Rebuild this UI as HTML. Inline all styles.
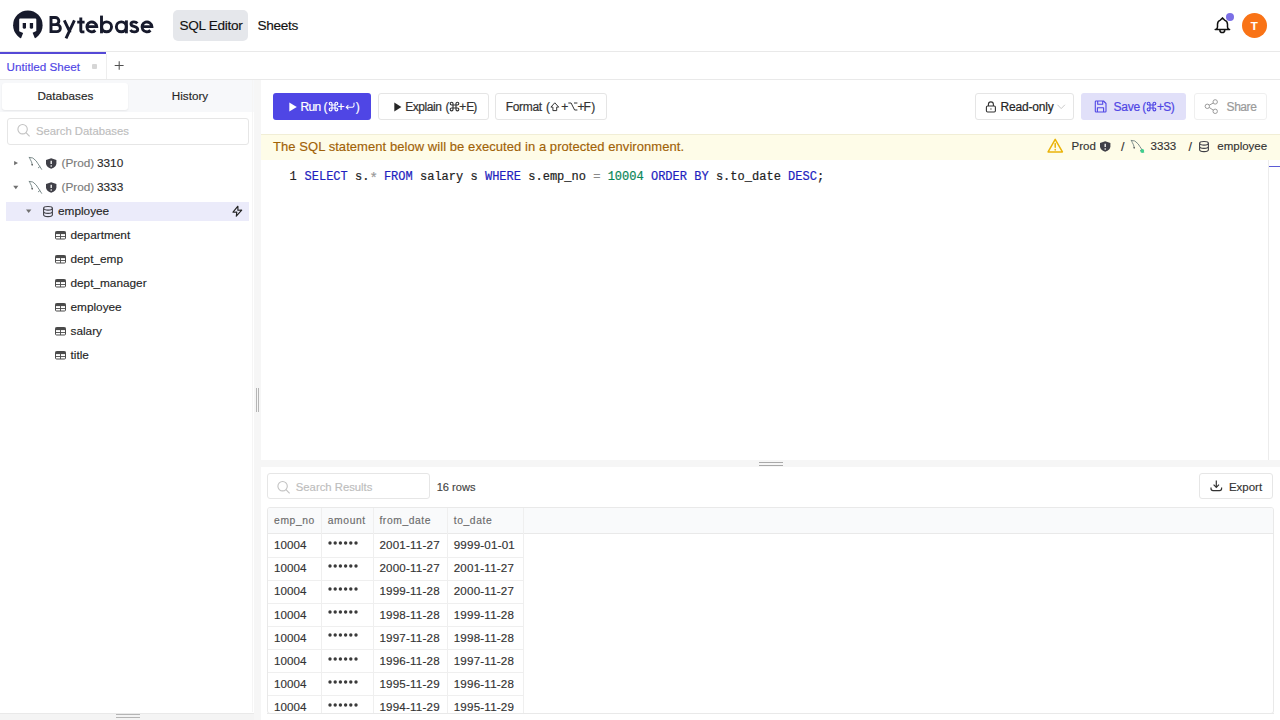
<!DOCTYPE html>
<html><head><meta charset="utf-8">
<style>
*{box-sizing:border-box;margin:0;padding:0}
html,body{width:1280px;height:720px;overflow:hidden;background:#fff;font-family:"Liberation Sans",sans-serif;color:#1f2937}
.a{position:absolute}
.t{position:absolute;white-space:nowrap;line-height:1;-webkit-text-stroke-width:0.15px}
.m{-webkit-text-stroke-width:0.3px}
svg{position:absolute;overflow:visible}
</style></head><body>
<svg style="left:0;top:0;width:0;height:0"><defs>
<g id="cmd"><path d="M3 3h3v3H3z M3 3V1.6A1.4 1.4 0 1 0 1.6 3H3 M6 3V1.6A1.4 1.4 0 1 1 7.4 3H6 M6 6v1.4A1.4 1.4 0 1 0 7.4 6H6 M3 6v1.4A1.4 1.4 0 1 1 1.6 6H3" fill="none"/></g>
<g id="tbl"><rect x="0.5" y="0.5" width="10" height="7.5" rx="1" fill="none" stroke="#4b4b4b" stroke-width="1"/><rect x="0.5" y="0.5" width="10" height="2.6" fill="#4b4b4b"/><path d="M0.5 5.5 H10.5 M5.5 3 V8" stroke="#4b4b4b" stroke-width="0.9"/></g>
<g id="dolphin" fill="none" stroke="#6f8080" stroke-width="0.9" stroke-linecap="round" stroke-linejoin="round"><path d="M0.2 0.3 Q4.2 -0.2 7.2 4 Q9 6.8 10.8 9.4 L12.6 12.3 M10.8 9.6 L9.3 10.8 M0.5 0.6 Q1.2 2.6 2.2 4.2 Q3 5.6 3.2 8"/><circle cx="3.2" cy="7.8" r="0.8" fill="#555" stroke="none"/></g>
<g id="shield"><path d="M5.2 0.3 L10.4 2 V5.3 Q10.4 8.9 5.2 10.7 Q0 8.9 0 5.3 V2 Z" fill="#404048"/><path d="M5.2 2.8 V6.1" stroke="#fff" stroke-width="1.3"/><circle cx="5.2" cy="8" r="0.8" fill="#fff"/></g>
<g id="dbi" fill="none" stroke="#3f3f46" stroke-width="1.1"><ellipse cx="5" cy="2.3" rx="4.4" ry="1.8"/><path d="M0.6 2.3 V8.8 Q0.6 10.6 5 10.6 Q9.4 10.6 9.4 8.8 V2.3 M0.6 5.6 Q0.6 7.4 5 7.4 Q9.4 7.4 9.4 5.6"/></g>
<g id="srch" fill="none" stroke="#c2c2c2" stroke-width="1.1"><circle cx="5.6" cy="5.2" r="4.7"/><path d="M9 8.6 L12.6 12.4"/></g>
</defs></svg>
<div class="a" style="left:0px;top:51px;width:1280px;height:1px;background:#e9e9e9"></div>
<svg style="left:0px;top:0px" width="50" height="50" viewBox="0 0 50 50"><circle cx="27.85" cy="25.3" r="14.75" fill="#171a2c"/>
<path d="M19.2 19.6 Q19.2 18.6 20.2 18.6 H35.3 Q36.3 18.6 36.3 19.6 V31 L32.6 32.8 L36.2 41.5 H19.8 L23.1 33.1 L19.2 31.2 Z" fill="#fff"/>
<path d="M22.7 22.9 H26 V27.3 Q26 28.8 24.35 28.8 Q22.7 28.8 22.7 27.3 Z" fill="#171a2c"/>
<path d="M29.8 22.9 H33.1 V27.3 Q33.1 28.8 31.45 28.8 Q29.8 28.8 29.8 27.3 Z" fill="#171a2c"/></svg>
<svg style="left:0px;top:0px" width="160" height="50" viewBox="0 0 160 50"><g fill="none" stroke="#171a2c" stroke-width="2.9">
<path d="M51 16 V33.1 M51 17.45 H55.25 A3.6 3.6 0 0 1 55.25 24.65 H51 M51 24.65 H56.85 A3.5 3.5 0 0 1 56.85 31.65 H51"/>
<path d="M64.3 20.4 L70.2 32.6 M74.4 20.4 L66 38.3"/>
<path d="M80.8 17.6 V30.2 Q80.8 31.85 82.4 31.85 H84.4 M77.2 22.15 H84.6"/>
<path d="M86.85 26.6 H96.75 A4.95 4.95 0 1 0 95.3 30.4"/>
<path d="M101.5 15.6 V33.3"/><circle cx="106.6" cy="26.85" r="4.95"/>
<circle cx="121.3" cy="26.85" r="4.95"/><path d="M126.4 20.4 V33.3"/>
<path d="M137.3 23.4 Q136.2 21.85 133.9 21.85 Q131 21.85 131 23.9 Q131 25.6 134 26.3 Q137.7 27.1 137.7 29.5 Q137.7 31.85 134.3 31.85 Q131.6 31.85 130.4 29.9"/>
<path d="M142 26.6 H151.9 A4.95 4.95 0 1 0 150.45 30.4"/>
</g></svg>
<div class="a" style="left:173px;top:10px;width:74.5px;height:31px;background:#e5e7eb;border-radius:5px"></div>
<div class="t" style="left:179.4px;top:19.4px;font-size:13.6px;color:#111;letter-spacing:-0.3px">SQL Editor</div>
<div class="t" style="left:257.5px;top:19.4px;font-size:13.6px;color:#111;letter-spacing:-0.3px">Sheets</div>
<svg style="left:1214px;top:16px" width="18" height="18" viewBox="0 0 18 18"><path d="M1.2 13.4 H15.6 M2 13.4 Q3.5 12.5 3.5 11 V8.3 Q3.5 5.2 6.4 4.1 L8.5 1.9 L10.5 4.1 Q13.5 5.2 13.5 8.3 V11 Q13.5 12.5 15 13.4 M5.9 14.2 A2.4 2.4 0 0 0 10.7 14.2" fill="none" stroke="#111" stroke-width="1.5" stroke-linecap="round" stroke-linejoin="round"/></svg>
<div class="a" style="left:1225.8px;top:12.5px;width:8px;height:8px;border-radius:50%;background:#7b6fe6"></div>
<div class="a" style="left:1241.7px;top:12.9px;width:25px;height:25px;border-radius:50%;background:#f97316"></div>
<div class="t" style="left:1250.8px;top:21px;font-size:11.5px;color:#fff;font-weight:bold">T</div>
<div class="a" style="left:0px;top:79px;width:1280px;height:1px;background:#e9e9e9"></div>
<div class="a" style="left:0px;top:52px;width:106px;height:2px;background:#5549d6"></div>
<div class="a" style="left:106px;top:54px;width:1px;height:25px;background:#eeeeee"></div>
<div class="t" style="left:6.6px;top:61px;font-size:11.7px;color:#5046e5;">Untitled Sheet</div>
<div class="a" style="left:91.8px;top:64px;width:5.5px;height:5px;border-radius:1px;background:#d6d6d6"></div>
<svg style="left:113px;top:60px" width="12" height="12" viewBox="0 0 12 12"><path d="M6.2 1.2V9.7M1.7 5.5H10.6" stroke="#505050" stroke-width="1.05"/></svg>
<div class="a" style="left:0px;top:80px;width:254px;height:32px;background:#f7f8fa"></div>
<div class="a" style="left:2px;top:82.5px;width:126px;height:27.5px;background:#fff;border-radius:3px;box-shadow:0 1px 2px rgba(0,0,0,.07)"></div>
<div class="t" style="left:37.4px;top:90px;font-size:11.7px;color:#262626;">Databases</div>
<div class="t" style="left:171.8px;top:90px;font-size:11.7px;color:#262626;">History</div>
<div class="a" style="left:7px;top:118px;width:241.5px;height:27px;border:1px solid #e6e6e6;border-radius:3px"></div>
<svg style="left:17px;top:124px" width="14" height="14" viewBox="0 0 14 14"><use href="#srch"/></svg>
<div class="t" style="left:35.9px;top:126px;font-size:11.3px;color:#bdbdbd;">Search Databases</div>
<svg style="left:0px;top:150px" width="60" height="50" viewBox="0 0 60 50"><path d="M14.1 10.9 L18 13.1 L14.1 15.3 Z" fill="#707070"/><path d="M13.2 35.8 L18.4 35.8 L15.8 39.3 Z" fill="#707070"/></svg>
<div class="a" style="left:6px;top:202.3px;width:242.5px;height:18.3px;background:#ebebfa"></div>
<svg style="left:0px;top:150px" width="60" height="70" viewBox="0 0 60 70"><path d="M26 59.4 L31.4 59.4 L28.7 63.1 Z" fill="#707070"/></svg>
<svg style="left:28.75px;top:156.9px" width="14" height="14" viewBox="0 0 14 14"><use href="#dolphin"/></svg>
<svg style="left:45.8px;top:158.2px" width="11" height="11" viewBox="0 0 11 11"><use href="#shield"/></svg>
<div class="t" style="left:61.5px;top:158px;font-size:11.8px;color:#7a7a7a;">(Prod)</div>
<div class="t" style="left:97px;top:158px;font-size:11.8px;color:#2a2a2a;">3310</div>
<svg style="left:28.75px;top:180.9px" width="14" height="14" viewBox="0 0 14 14"><use href="#dolphin"/></svg>
<svg style="left:45.8px;top:182.2px" width="11" height="11" viewBox="0 0 11 11"><use href="#shield"/></svg>
<div class="t" style="left:61.5px;top:182px;font-size:11.8px;color:#7a7a7a;">(Prod)</div>
<div class="t" style="left:97px;top:182px;font-size:11.8px;color:#2a2a2a;">3333</div>
<svg style="left:43px;top:206px" width="10" height="11" viewBox="0 0 10 11"><use href="#dbi"/></svg>
<div class="t" style="left:58px;top:206px;font-size:11.8px;color:#262626;">employee</div>
<svg style="left:232px;top:205px" width="11" height="12" viewBox="0 0 11 12"><path d="M5.9 1.2 L1 7.2 L4.8 7 L4.3 11.2 L9.7 5.1 L5.9 5.3 Z" fill="none" stroke="#222" stroke-width="1.15" stroke-linejoin="round"/></svg>
<svg style="left:55.3px;top:231px" width="12" height="9" viewBox="0 0 12 9"><use href="#tbl"/></svg>
<div class="t" style="left:70.5px;top:230px;font-size:11.8px;color:#262626;">department</div>
<svg style="left:55.3px;top:255px" width="12" height="9" viewBox="0 0 12 9"><use href="#tbl"/></svg>
<div class="t" style="left:70.5px;top:254px;font-size:11.8px;color:#262626;">dept_emp</div>
<svg style="left:55.3px;top:279px" width="12" height="9" viewBox="0 0 12 9"><use href="#tbl"/></svg>
<div class="t" style="left:70.5px;top:278px;font-size:11.8px;color:#262626;">dept_manager</div>
<svg style="left:55.3px;top:303px" width="12" height="9" viewBox="0 0 12 9"><use href="#tbl"/></svg>
<div class="t" style="left:70.5px;top:302px;font-size:11.8px;color:#262626;">employee</div>
<svg style="left:55.3px;top:327px" width="12" height="9" viewBox="0 0 12 9"><use href="#tbl"/></svg>
<div class="t" style="left:70.5px;top:326px;font-size:11.8px;color:#262626;">salary</div>
<svg style="left:55.3px;top:351px" width="12" height="9" viewBox="0 0 12 9"><use href="#tbl"/></svg>
<div class="t" style="left:70.5px;top:350px;font-size:11.8px;color:#262626;">title</div>
<div class="a" style="left:252px;top:80px;width:1px;height:632px;background:#f5f5f5"></div>
<div class="a" style="left:254px;top:80px;width:6.5px;height:640px;background:#f6f6f6"></div>
<div class="a" style="left:256px;top:388px;width:1px;height:24px;background:#b5b5b5"></div>
<div class="a" style="left:258.3px;top:388px;width:1px;height:24px;background:#b5b5b5"></div>
<div class="a" style="left:0px;top:712.5px;width:254px;height:8px;background:#f4f4f4;border-top:1px solid #e9e9e9"></div>
<div class="a" style="left:116px;top:714px;width:24px;height:1px;background:#b5b5b5"></div>
<div class="a" style="left:116px;top:716.5px;width:24px;height:1px;background:#b5b5b5"></div>
<div class="a" style="left:273.3px;top:93px;width:97.5px;height:26.7px;background:#4f46e5;border-radius:3px"></div>
<svg style="left:289px;top:101.5px" width="9" height="10" viewBox="0 0 9 10"><path d="M0.3 0.4 L7.8 4.9 L0.3 9.4 Z" fill="#fff"/></svg>
<div class="t" style="left:300.6px;top:100.5px;font-size:12px;color:#fff;-webkit-text-stroke-width:0.2px;letter-spacing:-0.7px">Run</div>
<div class="t" style="left:323.6px;top:100.5px;font-size:12px;color:#fff;-webkit-text-stroke-width:0.2px">(</div>
<svg style="left:328.6px;top:102.2px" width="9" height="9" viewBox="0 0 9 9"><use href="#cmd" stroke="#fff" stroke-width="1.15"/></svg>
<div class="t" style="left:337.6px;top:100.5px;font-size:12px;color:#fff;-webkit-text-stroke-width:0.2px">+</div>
<svg style="left:344.8px;top:101.6px" width="10" height="9" viewBox="0 0 10 9"><path d="M9 0.8V3.6A1.6 1.6 0 0 1 7.4 5.2H1.2 M3.4 3L1.2 5.2L3.4 7.4" fill="none" stroke="#fff" stroke-width="1.05"/></svg>
<div class="t" style="left:355.8px;top:100.5px;font-size:12px;color:#fff;-webkit-text-stroke-width:0.2px">)</div>
<div class="a" style="left:378px;top:93px;width:110.5px;height:26.7px;border:1px solid #e5e5e5;border-radius:3px"></div>
<svg style="left:393.8px;top:101.5px" width="9" height="10" viewBox="0 0 9 10"><path d="M0.3 0.4 L7.4 4.9 L0.3 9.4 Z" fill="#262626"/></svg>
<div class="t" style="left:405.2px;top:100.5px;font-size:12px;color:#333;-webkit-text-stroke-width:0.2px;letter-spacing:-0.45px">Explain</div>
<div class="t" style="left:445.4px;top:100.5px;font-size:12px;color:#333;-webkit-text-stroke-width:0.2px">(</div>
<svg style="left:449.5px;top:102.2px" width="9" height="9" viewBox="0 0 9 9"><use href="#cmd" stroke="#333" stroke-width="1.15"/></svg>
<div class="t" style="left:459.2px;top:100.5px;font-size:12px;color:#333;-webkit-text-stroke-width:0.2px">+</div>
<div class="t" style="left:466.3px;top:100.5px;font-size:12px;color:#333;-webkit-text-stroke-width:0.2px;letter-spacing:-0.7px">E</div>
<div class="t" style="left:473.2px;top:100.5px;font-size:12px;color:#333;-webkit-text-stroke-width:0.2px">)</div>
<div class="a" style="left:494.5px;top:93px;width:112.5px;height:26.7px;border:1px solid #e5e5e5;border-radius:3px"></div>
<div class="t" style="left:505.8px;top:100.5px;font-size:12px;color:#333;-webkit-text-stroke-width:0.2px;letter-spacing:-0.35px">Format</div>
<div class="t" style="left:546px;top:100.5px;font-size:12px;color:#333;-webkit-text-stroke-width:0.2px">(</div>
<svg style="left:550px;top:101.8px" width="10" height="10" viewBox="0 0 10 10"><path d="M4.8 0.8L0.9 5.1H2.9V8.6H6.7V5.1H8.7Z" fill="none" stroke="#333" stroke-width="1" stroke-linejoin="round"/></svg>
<div class="t" style="left:561.2px;top:100.5px;font-size:12px;color:#333;-webkit-text-stroke-width:0.2px">+</div>
<svg style="left:568.2px;top:102.3px" width="10" height="9" viewBox="0 0 10 9"><path d="M0.3 1H3.1L6.6 8H9.4 M6 1H9.4" fill="none" stroke="#333" stroke-width="1"/></svg>
<div class="t" style="left:577.5px;top:100.5px;font-size:12px;color:#333;-webkit-text-stroke-width:0.2px">+</div>
<div class="t" style="left:583.6px;top:100.5px;font-size:12px;color:#333;-webkit-text-stroke-width:0.2px;letter-spacing:-0.7px">F</div>
<div class="t" style="left:591.2px;top:100.5px;font-size:12px;color:#333;-webkit-text-stroke-width:0.2px">)</div>
<div class="a" style="left:975px;top:93px;width:99px;height:26.7px;border:1px solid #e5e5e5;border-radius:3px"></div>
<svg style="left:985px;top:100.5px" width="12" height="12" viewBox="0 0 12 12"><rect x="1.4" y="5" width="9" height="6" rx="1.2" fill="none" stroke="#333" stroke-width="1.1"/><path d="M3.4 5V3.4A2.5 2.5 0 0 1 8.4 3.4V5 M5.3 8H6.6" fill="none" stroke="#333" stroke-width="1.1"/></svg>
<div class="t" style="left:1000.6px;top:100.5px;font-size:12px;color:#262626;-webkit-text-stroke-width:0.2px;letter-spacing:-0.2px">Read-only</div>
<svg style="left:1056.5px;top:103.5px" width="9" height="6" viewBox="0 0 9 6"><path d="M0.5 0.8L4.2 4.6L7.9 0.8" fill="none" stroke="#c4c4c4" stroke-width="0.9"/></svg>
<div class="a" style="left:1081px;top:93px;width:105px;height:26.7px;background:#e1e0f9;border-radius:3px"></div>
<svg style="left:1093.5px;top:100px" width="13" height="13" viewBox="0 0 13 13"><path d="M1.3 1.8A0.8 0.8 0 0 1 2.1 1H9.5L12 3.5V11.2A0.8 0.8 0 0 1 11.2 12H2.1A0.8 0.8 0 0 1 1.3 11.2Z M3.7 1V4.2H8.7V1 M3.4 12V7.8H9.6V12" fill="none" stroke="#5046e5" stroke-width="1.1" stroke-linejoin="round"/></svg>
<div class="t" style="left:1113.5px;top:100.5px;font-size:12px;color:#5046e5;-webkit-text-stroke-width:0.2px;letter-spacing:-0.2px">Save</div>
<div class="t" style="left:1142.3px;top:100.5px;font-size:12px;color:#5046e5;-webkit-text-stroke-width:0.2px">(</div>
<svg style="left:1146.5px;top:102.2px" width="9" height="9" viewBox="0 0 9 9"><use href="#cmd" stroke="#5046e5" stroke-width="1.15"/></svg>
<div class="t" style="left:1157px;top:100.5px;font-size:12px;color:#5046e5;-webkit-text-stroke-width:0.2px">+</div>
<div class="t" style="left:1163.3px;top:100.5px;font-size:12px;color:#5046e5;-webkit-text-stroke-width:0.2px;letter-spacing:-0.7px">S</div>
<div class="t" style="left:1170.8px;top:100.5px;font-size:12px;color:#5046e5;-webkit-text-stroke-width:0.2px">)</div>
<div class="a" style="left:1193.5px;top:93px;width:73px;height:26.7px;border:1px solid #efefef;border-radius:3px"></div>
<svg style="left:1204px;top:98px" width="16" height="17" viewBox="0 0 16 17"><g fill="none" stroke="#9a9a9a" stroke-width="1"><circle cx="11.2" cy="3.9" r="2.2"/><circle cx="3.3" cy="8.3" r="2.2"/><circle cx="11.2" cy="13.3" r="2.2"/><path d="M5.2 7.2L9.3 5 M5.2 9.4L9.3 12.2"/></g></svg>
<div class="t" style="left:1226.6px;top:100.5px;font-size:12px;color:#9a9a9a;-webkit-text-stroke-width:0.2px;letter-spacing:-0.45px">Share</div>
<div class="a" style="left:260.5px;top:133.5px;width:1020px;height:26.5px;background:#fefce8;border-top:1px solid #f1eed6"></div>
<div class="t" style="left:273px;top:140px;font-size:13px;color:#a16207;letter-spacing:0.06px">The SQL statement below will be executed in a protected environment.</div>
<svg style="left:1046.5px;top:137.5px" width="17" height="16" viewBox="0 0 17 16"><path d="M8.2 1.4L15.4 13.9H1.1Z" fill="none" stroke="#eab308" stroke-width="1.5" stroke-linejoin="round"/><path d="M8.2 5.6V9.3 M8.2 11.4V11.9" fill="none" stroke="#eab308" stroke-width="1.5" stroke-linecap="round"/></svg>
<div class="t" style="left:1071.6px;top:141px;font-size:11.5px;color:#333;">Prod</div>
<svg style="left:1100.3px;top:141px" width="11" height="11" viewBox="0 0 11 11"><use href="#shield"/></svg>
<div class="t" style="left:1121px;top:141px;font-size:12.5px;color:#333;">/</div>
<svg style="left:1131.3px;top:140.3px" width="14" height="14" viewBox="0 0 14 14"><use href="#dolphin"/><circle cx="11.3" cy="11" r="1.9" fill="#3ecf8e"/></svg>
<div class="t" style="left:1150.6px;top:141px;font-size:11.5px;color:#333;">3333</div>
<div class="t" style="left:1188.5px;top:141px;font-size:12.5px;color:#333;">/</div>
<svg style="left:1198.5px;top:141px" width="10" height="11" viewBox="0 0 10 11"><use href="#dbi"/></svg>
<div class="t" style="left:1217.3px;top:141px;font-size:11.5px;color:#333;">employee</div>
<div class="t" style="left:289.5px;top:171px;font-size:12px;color:#222;font-family:'Liberation Mono',monospace">1</div>
<div class="t" style="left:304.5px;top:170px;font-size:12px;color:#222;font-family:'Liberation Mono',monospace;letter-spacing:0.015px;-webkit-text-stroke-width:0.2px"><span style="color:#1f1fc0">SELECT</span> s.<span style="color:#9a9a9a;display:inline-block;width:7.2px;text-align:center;font-size:14px;position:relative;top:2.5px;line-height:12px">*</span> <span style="color:#1f1fc0">FROM</span> salary s <span style="color:#1f1fc0">WHERE</span> s.emp_no <span style="color:#8a8a8a">=</span> <span style="color:#098658">10004</span> <span style="color:#1f1fc0">ORDER</span> <span style="color:#1f1fc0">BY</span> s.to_date <span style="color:#1f1fc0">DESC</span>;</div>
<div class="a" style="left:1268px;top:160px;width:1px;height:300px;background:#ececec"></div>
<div class="a" style="left:1269px;top:165.5px;width:11px;height:1.5px;background:#5b5bd6"></div>
<div class="a" style="left:260.5px;top:460px;width:1020px;height:7px;background:#f6f6f6"></div>
<div class="a" style="left:758.5px;top:462px;width:24px;height:1px;background:#a9a9a9"></div>
<div class="a" style="left:758.5px;top:464.5px;width:24px;height:1px;background:#a9a9a9"></div>
<div class="a" style="left:267px;top:472.6px;width:162.5px;height:26.8px;border:1px solid #e6e6e6;border-radius:3px"></div>
<svg style="left:277.3px;top:480.8px" width="14" height="14" viewBox="0 0 14 14"><use href="#srch"/></svg>
<div class="t" style="left:295.8px;top:482px;font-size:11.3px;color:#bdbdbd;">Search Results</div>
<div class="t" style="left:436.7px;top:482px;font-size:11.1px;color:#444;">16 rows</div>
<div class="a" style="left:1198.7px;top:473.3px;width:74.6px;height:26.2px;border:1px solid #e6e6e6;border-radius:3px"></div>
<svg style="left:1210px;top:480px" width="13" height="12" viewBox="0 0 13 12"><path d="M6.3 0.6V7.2 M3.6 4.6L6.3 7.3L9 4.6 M1 7.6V8.6A2 2 0 0 0 3 10.6H9.6A2 2 0 0 0 11.6 8.6V7.6" fill="none" stroke="#333" stroke-width="1.2"/></svg>
<div class="t" style="left:1228.9px;top:482px;font-size:11.5px;color:#333;">Export</div>
<div class="a" style="left:267px;top:506.5px;width:1006.5px;height:207px;border:1px solid #e9e9e9;border-radius:3px"></div>
<div class="a" style="left:268px;top:507.5px;width:1004.5px;height:26px;background:#f9fafb;border-bottom:1px solid #e9e9e9;border-radius:2px 2px 0 0"></div>
<div class="a" style="left:321px;top:507.5px;width:1px;height:205px;background:#efefef"></div>
<div class="a" style="left:372.7px;top:507.5px;width:1px;height:205px;background:#efefef"></div>
<div class="a" style="left:446.7px;top:507.5px;width:1px;height:205px;background:#efefef"></div>
<div class="a" style="left:523px;top:507.5px;width:1px;height:205px;background:#efefef"></div>
<div class="t" style="left:274.1px;top:516px;font-size:10.3px;color:#6b6b6b;letter-spacing:0.6px">emp_no</div>
<div class="t" style="left:327.8px;top:516px;font-size:10.3px;color:#6b6b6b;letter-spacing:0.6px">amount</div>
<div class="t" style="left:379.4px;top:516px;font-size:10.3px;color:#6b6b6b;letter-spacing:0.6px">from_date</div>
<div class="t" style="left:453.7px;top:516px;font-size:10.3px;color:#6b6b6b;letter-spacing:0.6px">to_date</div>
<div class="t" style="left:274.1px;top:539px;font-size:11.6px;color:#333;">10004</div>
<div class="t" style="left:379.4px;top:539px;font-size:11.6px;color:#333;letter-spacing:0.2px">2001-11-27</div>
<div class="t" style="left:453.7px;top:539px;font-size:11.6px;color:#333;letter-spacing:0.2px">9999-01-01</div>
<svg style="left:328px;top:541.0px" width="32" height="4" viewBox="0 0 32 4"><g fill="#3a3a3a"><circle cx="2.0" cy="2" r="1.7"/><circle cx="7.2" cy="2" r="1.7"/><circle cx="12.4" cy="2" r="1.7"/><circle cx="17.6" cy="2" r="1.7"/><circle cx="22.8" cy="2" r="1.7"/><circle cx="28.0" cy="2" r="1.7"/></g></svg>
<div class="a" style="left:268px;top:556.5px;width:255px;height:1px;background:#efefef"></div>
<div class="t" style="left:274.1px;top:562px;font-size:11.6px;color:#333;">10004</div>
<div class="t" style="left:379.4px;top:562px;font-size:11.6px;color:#333;letter-spacing:0.2px">2000-11-27</div>
<div class="t" style="left:453.7px;top:562px;font-size:11.6px;color:#333;letter-spacing:0.2px">2001-11-27</div>
<svg style="left:328px;top:564.1px" width="32" height="4" viewBox="0 0 32 4"><g fill="#3a3a3a"><circle cx="2.0" cy="2" r="1.7"/><circle cx="7.2" cy="2" r="1.7"/><circle cx="12.4" cy="2" r="1.7"/><circle cx="17.6" cy="2" r="1.7"/><circle cx="22.8" cy="2" r="1.7"/><circle cx="28.0" cy="2" r="1.7"/></g></svg>
<div class="a" style="left:268px;top:579.6px;width:255px;height:1px;background:#efefef"></div>
<div class="t" style="left:274.1px;top:585px;font-size:11.6px;color:#333;">10004</div>
<div class="t" style="left:379.4px;top:585px;font-size:11.6px;color:#333;letter-spacing:0.2px">1999-11-28</div>
<div class="t" style="left:453.7px;top:585px;font-size:11.6px;color:#333;letter-spacing:0.2px">2000-11-27</div>
<svg style="left:328px;top:587.2px" width="32" height="4" viewBox="0 0 32 4"><g fill="#3a3a3a"><circle cx="2.0" cy="2" r="1.7"/><circle cx="7.2" cy="2" r="1.7"/><circle cx="12.4" cy="2" r="1.7"/><circle cx="17.6" cy="2" r="1.7"/><circle cx="22.8" cy="2" r="1.7"/><circle cx="28.0" cy="2" r="1.7"/></g></svg>
<div class="a" style="left:268px;top:602.7px;width:255px;height:1px;background:#efefef"></div>
<div class="t" style="left:274.1px;top:609px;font-size:11.6px;color:#333;">10004</div>
<div class="t" style="left:379.4px;top:609px;font-size:11.6px;color:#333;letter-spacing:0.2px">1998-11-28</div>
<div class="t" style="left:453.7px;top:609px;font-size:11.6px;color:#333;letter-spacing:0.2px">1999-11-28</div>
<svg style="left:328px;top:610.3px" width="32" height="4" viewBox="0 0 32 4"><g fill="#3a3a3a"><circle cx="2.0" cy="2" r="1.7"/><circle cx="7.2" cy="2" r="1.7"/><circle cx="12.4" cy="2" r="1.7"/><circle cx="17.6" cy="2" r="1.7"/><circle cx="22.8" cy="2" r="1.7"/><circle cx="28.0" cy="2" r="1.7"/></g></svg>
<div class="a" style="left:268px;top:625.8px;width:255px;height:1px;background:#efefef"></div>
<div class="t" style="left:274.1px;top:632px;font-size:11.6px;color:#333;">10004</div>
<div class="t" style="left:379.4px;top:632px;font-size:11.6px;color:#333;letter-spacing:0.2px">1997-11-28</div>
<div class="t" style="left:453.7px;top:632px;font-size:11.6px;color:#333;letter-spacing:0.2px">1998-11-28</div>
<svg style="left:328px;top:633.4px" width="32" height="4" viewBox="0 0 32 4"><g fill="#3a3a3a"><circle cx="2.0" cy="2" r="1.7"/><circle cx="7.2" cy="2" r="1.7"/><circle cx="12.4" cy="2" r="1.7"/><circle cx="17.6" cy="2" r="1.7"/><circle cx="22.8" cy="2" r="1.7"/><circle cx="28.0" cy="2" r="1.7"/></g></svg>
<div class="a" style="left:268px;top:648.9px;width:255px;height:1px;background:#efefef"></div>
<div class="t" style="left:274.1px;top:655px;font-size:11.6px;color:#333;">10004</div>
<div class="t" style="left:379.4px;top:655px;font-size:11.6px;color:#333;letter-spacing:0.2px">1996-11-28</div>
<div class="t" style="left:453.7px;top:655px;font-size:11.6px;color:#333;letter-spacing:0.2px">1997-11-28</div>
<svg style="left:328px;top:656.5px" width="32" height="4" viewBox="0 0 32 4"><g fill="#3a3a3a"><circle cx="2.0" cy="2" r="1.7"/><circle cx="7.2" cy="2" r="1.7"/><circle cx="12.4" cy="2" r="1.7"/><circle cx="17.6" cy="2" r="1.7"/><circle cx="22.8" cy="2" r="1.7"/><circle cx="28.0" cy="2" r="1.7"/></g></svg>
<div class="a" style="left:268px;top:672.1px;width:255px;height:1px;background:#efefef"></div>
<div class="t" style="left:274.1px;top:678px;font-size:11.6px;color:#333;">10004</div>
<div class="t" style="left:379.4px;top:678px;font-size:11.6px;color:#333;letter-spacing:0.2px">1995-11-29</div>
<div class="t" style="left:453.7px;top:678px;font-size:11.6px;color:#333;letter-spacing:0.2px">1996-11-28</div>
<svg style="left:328px;top:679.7px" width="32" height="4" viewBox="0 0 32 4"><g fill="#3a3a3a"><circle cx="2.0" cy="2" r="1.7"/><circle cx="7.2" cy="2" r="1.7"/><circle cx="12.4" cy="2" r="1.7"/><circle cx="17.6" cy="2" r="1.7"/><circle cx="22.8" cy="2" r="1.7"/><circle cx="28.0" cy="2" r="1.7"/></g></svg>
<div class="a" style="left:268px;top:695.2px;width:255px;height:1px;background:#efefef"></div>
<div class="t" style="left:274.1px;top:701px;font-size:11.6px;color:#333;">10004</div>
<div class="t" style="left:379.4px;top:701px;font-size:11.6px;color:#333;letter-spacing:0.2px">1994-11-29</div>
<div class="t" style="left:453.7px;top:701px;font-size:11.6px;color:#333;letter-spacing:0.2px">1995-11-29</div>
<svg style="left:328px;top:702.8px" width="32" height="4" viewBox="0 0 32 4"><g fill="#3a3a3a"><circle cx="2.0" cy="2" r="1.7"/><circle cx="7.2" cy="2" r="1.7"/><circle cx="12.4" cy="2" r="1.7"/><circle cx="17.6" cy="2" r="1.7"/><circle cx="22.8" cy="2" r="1.7"/><circle cx="28.0" cy="2" r="1.7"/></g></svg>
<div class="a" style="left:260.5px;top:713.5px;width:1020px;height:7px;background:#fff"></div>
<div class="a" style="left:267px;top:712.5px;width:1006.5px;height:1px;background:#e9e9e9"></div>
</body></html>
